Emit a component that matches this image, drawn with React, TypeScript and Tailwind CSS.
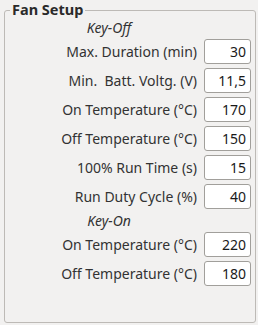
import React from 'react';

interface Field {
  label: string;
  value: string;
}

const keyOff: Field[] = [
  { label: 'Max. Duration (min)', value: '30' },
  { label: 'Min.  Batt. Voltg. (V)', value: '11,5' },
  { label: 'On Temperature (°C)', value: '170' },
  { label: 'Off Temperature (°C)', value: '150' },
  { label: '100% Run Time (s)', value: '15' },
  { label: 'Run Duty Cycle (%)', value: '40' },
];

const keyOn: Field[] = [
  { label: 'On Temperature (°C)', value: '220' },
  { label: 'Off Temperature (°C)', value: '180' },
];

function Row({ field }: { field: Field }) {
  return (
    <div className="flex items-center h-[25px]">
      <span className="flex-1 text-right whitespace-pre pr-[7px]">{field.label}</span>
      <input
        readOnly
        value={field.value}
        className="w-[47px] h-[25px] border border-[#a19f9b] rounded-[3px] bg-white text-right pr-[4px] text-[#1a1a1a] outline-none"
      />
    </div>
  );
}

function Heading({ text }: { text: string }) {
  return <div className="h-[15px] leading-[15px] text-center italic pr-[7px] mr-[47px]">{text}</div>;
}

export default function App() {
  return (
    <div
      className="w-[258px] h-[325px] bg-[#f2f1f0] text-[14px] text-[#333333]"
      style={{ fontFamily: '"Noto Sans", "Open Sans", sans-serif' }}
    >
      <fieldset className="ml-[4px] w-[252px] h-[323px] border border-[#bdbab6] rounded-[3px]">
        <legend className="ml-[5px] px-[2px] h-[20px] leading-[18px] text-[14.5px] font-bold text-[#2a2a2a]">Fan Setup</legend>
        <div className="flex flex-col gap-[4px] pl-[16px] pr-[4px]">
          <Heading text="Key-Off" />
          {keyOff.map(f => (
            <Row key={f.label} field={f} />
          ))}
          <Heading text="Key-On" />
          {keyOn.map(f => (
            <Row key={'on' + f.label} field={f} />
          ))}
        </div>
      </fieldset>
    </div>
  );
}
